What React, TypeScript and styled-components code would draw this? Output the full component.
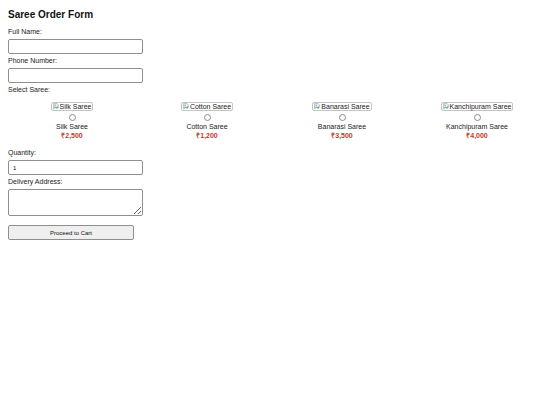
import React from "react";
import styled, { createGlobalStyle } from "styled-components";

const Global = createGlobalStyle`
  html, body { margin: 0; padding: 0; background: #fff; overflow-x: hidden; }
  body { margin: 8px; font-family: "Liberation Sans", Arial, sans-serif; color: #222; }
`;

const Title = styled.h2`
  margin: 1px 0 6px 0;
  font-size: 10px;
  line-height: 12px;
  font-weight: bold;
  color: #111;
`;

const Label = styled.label`
  display: block;
  font-size: 7px;
  line-height: 10px;
  color: #222;
  margin-bottom: 2px;
`;

const TextInput = styled.input`
  display: block;
  box-sizing: border-box;
  width: 135px;
  height: 15px;
  margin: 0 0 2px 0;
  padding: 0 4px;
  border: 1px solid #8f8f8f;
  border-radius: 2px;
  font-family: "Liberation Sans", Arial, sans-serif;
  font-size: 6px;
  color: #111;
  background: #fff;
  outline: none;
`;

const TextArea = styled.textarea`
  display: block;
  box-sizing: border-box;
  width: 135px;
  height: 27px;
  margin: 0;
  padding: 2px 4px;
  border: 1px solid #8f8f8f;
  border-radius: 2px;
  font-family: "Liberation Sans", Arial, sans-serif;
  font-size: 6px;
  resize: both;
  outline: none;
`;

const SareeGrid = styled.div`
  display: grid;
  grid-template-columns: repeat(4, 135px);
  margin: 7px 0 8px -3.5px;
`;

const SareeItem = styled.div`
  display: flex;
  flex-direction: column;
  align-items: center;
`;

const ImgAlt = styled.span`
  display: inline-flex;
  align-items: center;
  box-sizing: border-box;
  height: 9px;
  padding: 0 1px 0 1px;
  border: 1px solid #c4c4c4;
  border-radius: 2px;
  font-size: 7px;
  line-height: 7px;
  color: #222;
  white-space: nowrap;
`;

const Radio = styled.input`
  appearance: none;
  -webkit-appearance: none;
  box-sizing: border-box;
  width: 7px;
  height: 7px;
  margin: 3px 0 1px 0;
  border: 1px solid #8a8a8a;
  border-radius: 50%;
  background: #fff;
`;

const Name = styled.div`
  font-size: 7px;
  line-height: 9px;
  color: #222;
`;

const Price = styled.div`
  font-size: 7px;
  line-height: 9px;
  font-weight: bold;
  color: #c0392b;
`;

const Button = styled.button`
  display: block;
  box-sizing: border-box;
  width: 126px;
  height: 15px;
  margin-top: 9px;
  padding: 0;
  border: 1px solid #8f8f8f;
  border-radius: 2px;
  background: #efefef;
  font-family: "Liberation Sans", Arial, sans-serif;
  font-size: 6px;
  color: #111;
`;

const BrokenIcon = () => (
  <svg width="6" height="7" viewBox="0 0 12 14" style={{ marginRight: 1, flexShrink: 0 }}>
    <path d="M1 1 H8 L11 4 V9 L8 11 L5 9 L1 12 Z" fill="#e8eef5" stroke="#8a9aaa" strokeWidth="1" />
    <path d="M2 10 L5 7 L7 9 L10 6 V9 L8 11 L5 9 L2 11 Z" fill="#4caf50" />
    <circle cx="4" cy="4.5" r="1.3" fill="#5aa0d8" />
  </svg>
);

const sarees = [
  { name: "Silk Saree", price: "₹2,500" },
  { name: "Cotton Saree", price: "₹1,200" },
  { name: "Banarasi Saree", price: "₹3,500" },
  { name: "Kanchipuram Saree", price: "₹4,000" },
];

export default function App() {
  return (
    <>
      <Global />
      <form onSubmit={(e) => e.preventDefault()}>
        <Title>Saree Order Form</Title>
        <Label>Full Name:</Label>
        <TextInput type="text" />
        <Label>Phone Number:</Label>
        <TextInput type="text" />
        <Label>Select Saree:</Label>
        <SareeGrid>
          {sarees.map((s) => (
            <SareeItem key={s.name}>
              <ImgAlt>
                <BrokenIcon />
                {s.name}
              </ImgAlt>
              <Radio type="radio" name="saree" />
              <Name>{s.name}</Name>
              <Price>{s.price}</Price>
            </SareeItem>
          ))}
        </SareeGrid>
        <Label>Quantity:</Label>
        <TextInput type="number" defaultValue={1} />
        <Label>Delivery Address:</Label>
        <TextArea />
        <Button type="submit">Proceed to Cart</Button>
      </form>
    </>
  );
}
